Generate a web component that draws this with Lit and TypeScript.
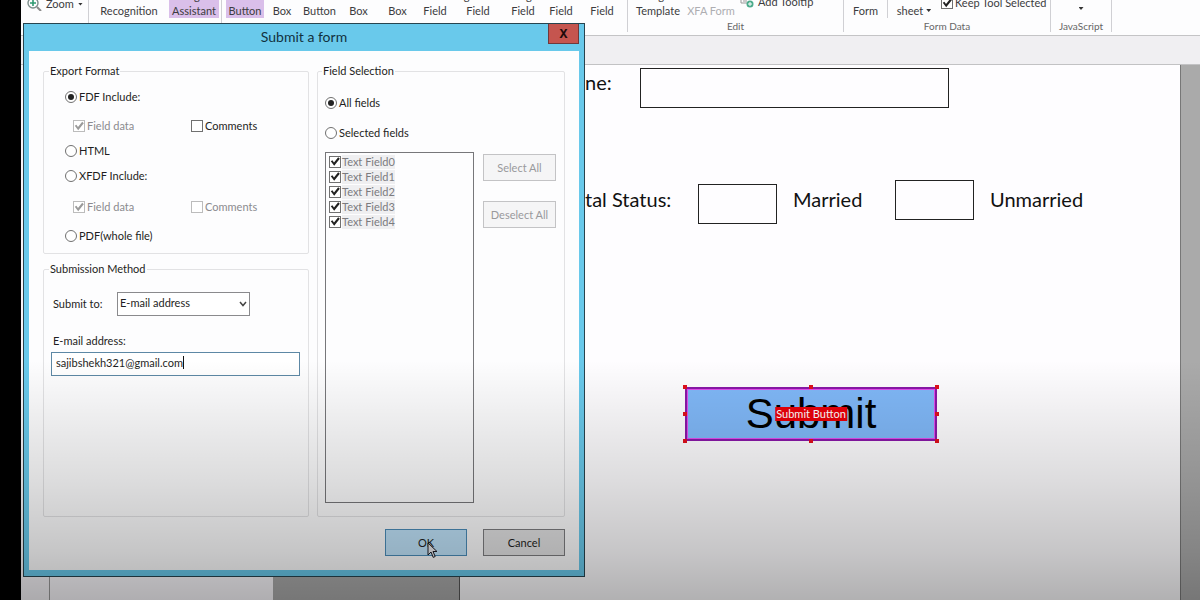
import { LitElement, html, css } from "lit";
import { customElement, property } from "lit/decorators.js";

const controls = css`
  * {
    box-sizing: border-box;
  }
  input[type="checkbox"],
  input[type="radio"] {
    appearance: none;
    flex: none;
    width: 12px;
    height: 12px;
    margin: 0;
    border: 1px solid #707070;
    background: #fff;
    display: grid;
    place-content: center;
  }
  input[type="radio"] {
    border-radius: 50%;
  }
  input[type="radio"]:checked::after {
    content: "";
    width: 6px;
    height: 6px;
    border-radius: 50%;
    background: #222;
  }
  input[type="checkbox"]:checked::after {
    content: "";
    width: 10px;
    height: 10px;
    background: #222;
    clip-path: polygon(8% 48%, 24% 38%, 40% 60%, 82% 8%, 98% 22%, 42% 92%);
  }
  input:disabled {
    border-color: #bcbcbc;
  }
  input[type="checkbox"]:disabled:checked::after {
    background: #9a9a9a;
  }
`;

@customElement("ribbon-bar")
export class RibbonBar extends LitElement {
  static styles = [
    controls,
    css`
      :host {
        display: flex;
        box-sizing: border-box;
        height: 36px;
        background: #fdfdfe;
        border-bottom: 1px solid #c4c4c6;
        color: #3c3c40;
        font: 10px/12px Lato, sans-serif;
      }
      .group {
        display: flex;
        flex-direction: column;
        justify-content: space-between;
        height: 32px;
        border-right: 1px solid #d0d0d4;
      }
      .tools {
        display: grid;
        height: 18px;
        align-items: end;
        align-content: end;
        justify-items: center;
      }
      .view {
        width: 68px;
      }
      .view .tools {
        height: 12px;
      }
      .assist {
        width: 133px;
      }
      .assist .tools {
        grid-template-columns: 80px 50px;
      }
      .fields {
        width: 406px;
      }
      .fields .tools {
        grid-template-columns: 4px 38px 36px 39px 39px 39px 36px 50px 40px 36px 46px;
      }
      .edit {
        width: 216px;
      }
      .edit .tools {
        grid-template-columns: 60px 46px 1fr;
      }
      .data {
        width: 207px;
      }
      .data .tools {
        grid-template-columns: 44px 52px 1fr;
      }
      .script {
        width: 61px;
      }
      button {
        border: 0;
        padding: 0;
        background: none;
        color: inherit;
        font: inherit;
        font-size: 11px;
        line-height: 14px;
        white-space: nowrap;
        display: grid;
        row-gap: 1px;
        align-content: end;
        justify-items: center;
        height: 30px;
      }
      .on {
        justify-self: stretch;
        background: #dabfea;
      }
      .off {
        color: #aeaeb2;
      }
      .row {
        display: flex;
        align-items: center;
        justify-self: start;
        gap: 4px;
        height: 16px;
      }
      label {
        display: flex;
        align-items: center;
        gap: 2px;
        height: 16px;
        font-size: 11px;
        white-space: nowrap;
      }
      .sep {
        border-right: 1px solid #d0d0d4;
        justify-self: stretch;
      }
      .caption {
        text-align: center;
        color: #666;
      }
      .arrow {
        width: 5px;
        height: 3px;
        background: #333;
        clip-path: polygon(0 0, 100% 0, 50% 100%);
      }
      .sheet {
        display: flex;
        align-items: end;
        gap: 3px;
      }
      .sheet .arrow {
        margin-bottom: 6px;
      }
      .zoom {
        margin-left: 6px;
      }
      .tip {
        margin: 0 0 8px 6px;
      }
      .keep {
        justify-self: start;
        margin: 0 0 7px 1px;
      }
      .script .tools {
        height: 10px;
      }
    `,
  ];

  tool(top: string, name: string, cls = "") {
    return html`<button class=${cls}>
      ${top ? html`<span>${top}</span>` : ""}<span>${name}</span>
    </button>`;
  }

  render() {
    return html`
      <div class="group view">
        <div class="tools">
          <button class="row zoom">
            <svg width="15" height="14" viewBox="0 0 15 14" fill="none">
              <circle cx="6" cy="6" r="5" stroke="#7d8f8c" stroke-width="1.4" />
              <path d="M10 10l4 4" stroke="#8a8a8a" stroke-width="2" />
              <path d="M6 3v6M3 6h6" stroke="#2f9a72" stroke-width="1.6" />
            </svg>
            Zoom <i class="arrow"></i>
          </button>
        </div>
      </div>
      <div class="group assist">
        <div class="tools">
          ${this.tool("", "Recognition")} ${this.tool("Designer", "Assistant", "on")}
        </div>
      </div>
      <div class="group fields">
        <div class="tools">
          <span></span>
          ${this.tool("", "Button", "on")} ${this.tool("", "Box")}
          ${this.tool("", "Button")} ${this.tool("", "Box")} ${this.tool("", "Box")}
          ${this.tool("", "Field")} ${this.tool("Signature", "Field")}
          ${this.tool("Image", "Field")} ${this.tool("", "Field")}
          ${this.tool("", "Field")}
        </div>
      </div>
      <div class="group edit">
        <div class="tools">
          ${this.tool("Page", "Template")} ${this.tool("", "XFA Form", "off")}
          <button class="row tip">
            <svg width="14" height="12" viewBox="0 0 14 12" fill="none">
              <path d="M1 0v7h6M3 3h8M3 5h4M12 0v4" stroke="#999" />
              <circle cx="10" cy="8" r="3.5" fill="#4cab8c" />
              <path d="M10 6v4M8 8h4" stroke="#fff" />
            </svg>
            Add Tooltip
          </button>
        </div>
        <div class="caption">Edit</div>
      </div>
      <div class="group data">
        <div class="tools">
          ${this.tool("", "Form", "sep")}
          <button class="sheet">sheet<i class="arrow"></i></button>
          <label class="keep"><input type="checkbox" checked />Keep Tool Selected</label>
        </div>
        <div class="caption">Form Data</div>
      </div>
      <div class="group script">
        <div class="tools"><i class="arrow"></i></div>
        <div class="caption">JavaScript</div>
      </div>
    `;
  }
}

@customElement("submit-dialog")
export class SubmitDialog extends LitElement {
  @property() email = "sajibshekh321@gmail.com";

  static styles = [
    controls,
    css`
      :host {
        display: block;
        box-sizing: border-box;
        border: 1px solid #27444f;
        background: #69c9eb;
        padding: 0 5px 6px;
        color: #1e1e22;
        font: 11px/14px Lato, sans-serif;
      }
      header {
        display: grid;
        grid-template-columns: 31px 1fr 31px;
        height: 27px;
      }
      h1 {
        margin: 0;
        text-align: center;
        color: #12313e;
        font: 14px/26px Lato, sans-serif;
      }
      .close {
        height: 20px;
        padding: 0;
        border: 1px solid #70383a;
        border-top: 0;
        background: #c5554f;
        color: #200a0a;
        font: bold 12px/18px "Noto Sans", sans-serif;
      }
      .body {
        background: #fdfdfe;
        padding: 13px 14px 17px;
        display: grid;
        grid-template-columns: 266fr 248fr;
        grid-template-rows: 190px 255px 28px;
        column-gap: 8px;
        row-gap: 8px;
      }
      fieldset {
        min-width: 0;
        margin: 0;
        padding: 0;
        border: 1px solid #e2e2e4;
        border-radius: 2px;
      }
      legend {
        margin-left: -3px;
        padding: 0 1px;
      }
      label {
        display: flex;
        align-items: center;
        gap: 2px;
      }
      .off {
        color: #8b8b8f;
      }
      .export {
        display: grid;
        grid-template-rows: 28px 30px 20px 30px 32px 26px;
        padding: 5px 0 0 21px;
      }
      .export legend {
        margin-left: -16px;
      }
      .pair {
        display: grid;
        grid-template-columns: 118px 1fr;
        padding-left: 8px;
      }
      .selection {
        grid-column: 2;
        grid-row: 1 / 3;
        padding: 11px 8px 10px 7px;
      }
      .radios {
        display: grid;
        grid-template-rows: 28px 32px;
        padding-bottom: 3px;
      }
      .pick {
        display: grid;
        grid-template-columns: 149fr 73fr;
        column-gap: 9px;
      }
      .list {
        height: 351px;
        border: 1px solid #77777a;
        margin: 0;
        padding: 1px 3px;
        list-style: none;
      }
      .list li {
        display: flex;
        height: 15px;
      }
      .list span {
        background: #efeff1;
        color: #7b7b7f;
      }
      .list label {
        gap: 1px;
      }
      .side {
        display: grid;
        align-content: start;
        gap: 20px;
        padding-top: 2px;
      }
      button {
        height: 27px;
        padding: 0;
        border: 1px solid #7d7d80;
        background: #e3e3e4;
        color: inherit;
        font: inherit;
      }
      button:disabled {
        border-color: #c3c3c5;
        background: #f5f5f6;
        color: #99999c;
      }
      .method {
        padding: 16px 8px 0 7px;
      }
      .method legend {
        margin-left: -2px;
      }
      .to {
        display: grid;
        grid-template-columns: 64px 133px;
        align-items: center;
        padding-left: 2px;
      }
      .choice {
        display: grid;
      }
      .choice > * {
        grid-area: 1 / 1;
      }
      .choice svg {
        place-self: center end;
        margin-right: 3px;
        pointer-events: none;
      }
      select {
        appearance: none;
        height: 24px;
        padding: 0 2px 2px;
        border: 1px solid #8a8a8d;
        border-radius: 0;
        background: #fff;
        color: inherit;
        font: inherit;
      }
      .mail {
        display: block;
        margin-top: 18px;
      }
      .mail > span {
        display: block;
        padding-left: 2px;
      }
      .entry {
        position: relative;
        margin-top: 4px;
      }
      .entry input {
        display: block;
        width: 100%;
        height: 24px;
        border: 1px solid #5d88a5;
        padding: 0 4px 3px;
        background: #fff;
        color: inherit;
        font: inherit;
      }
      .caret {
        position: absolute;
        left: 132px;
        top: 4px;
        width: 1px;
        height: 13px;
        background: #111;
      }
      footer {
        grid-column: 1 / 3;
        display: flex;
        justify-content: end;
        gap: 16px;
        padding-top: 4px;
      }
      footer button {
        width: 82px;
      }
      .ok {
        position: relative;
        border-color: #4b8db9;
        background: #c0e4fb;
      }
      .pointer {
        position: absolute;
        left: 41px;
        top: 12px;
      }
    `,
  ];

  radio(group: string, text: string, checked = false) {
    return html`<label
      ><input type="radio" name=${group} ?checked=${checked} />${text}</label
    >`;
  }

  check(text: string, checked: boolean, disabled: boolean) {
    return html`<label class=${disabled ? "off" : ""}
      ><input type="checkbox" ?checked=${checked} ?disabled=${disabled} />${text}</label
    >`;
  }

  render() {
    return html`
      <header>
        <span></span>
        <h1>Submit a form</h1>
        <button class="close" aria-label="Close">X</button>
      </header>
      <div class="body">
        <fieldset class="export">
          <legend>Export Format</legend>
          ${this.radio("format", "FDF Include:", true)}
          <div class="pair">
            ${this.check("Field data", true, true)} ${this.check("Comments", false, false)}
          </div>
          ${this.radio("format", "HTML")} ${this.radio("format", "XFDF Include:")}
          <div class="pair">
            ${this.check("Field data", true, true)} ${this.check("Comments", false, true)}
          </div>
          ${this.radio("format", "PDF(whole file)")}
        </fieldset>
        <fieldset class="method">
          <legend>Submission Method</legend>
          <div class="to">
            <label for="target">Submit to:</label>
            <div class="choice">
              <select id="target">
                <option>E-mail address</option>
              </select>
              <svg width="8" height="6" viewBox="0 0 8 6" fill="none">
                <path d="M1 1l3 3.5L7 1" stroke="#444" stroke-width="1.5" />
              </svg>
            </div>
          </div>
          <label class="mail">
            <span>E-mail address:</span>
            <div class="entry">
              <input type="text" .value=${this.email} />
              <i class="caret"></i>
            </div>
          </label>
        </fieldset>
        <fieldset class="selection">
          <legend>Field Selection</legend>
          <div class="radios">
            ${this.radio("scope", "All fields", true)}
            ${this.radio("scope", "Selected fields")}
          </div>
          <div class="pick">
            <ul class="list">
              ${[0, 1, 2, 3, 4].map(
                (n) => html`<li>
                  <label><input type="checkbox" checked /><span>Text Field${n}</span></label>
                </li>`
              )}
            </ul>
            <div class="side">
              <button disabled>Select All</button>
              <button disabled>Deselect All</button>
            </div>
          </div>
        </fieldset>
        <footer>
          <button class="ok">
            OK
            <svg class="pointer" width="12" height="17" viewBox="0 0 12 17">
              <path
                d="M1 1v12l3-3 2.2 5.4 2-.9L6 9.500h4z"
                fill="#e8e8ec"
                stroke="#1a1a22"
              />
            </svg>
          </button>
          <button>Cancel</button>
        </footer>
      </div>
    `;
  }
}

@customElement("form-page")
export class FormPage extends LitElement {
  static styles = css`
    * {
      box-sizing: border-box;
    }
    :host {
      display: block;
      background: #fefdff;
      border-right: 1px solid #777;
      border-left: 1px solid #555;
      padding: 3px 0 0 125px;
      color: #111;
      font: 20px/24px Lato, sans-serif;
    }
    label {
      white-space: nowrap;
    }
    .name {
      display: grid;
      grid-template-columns: 55px 309px;
    }
    .name label {
      padding-top: 2px;
    }
    input {
      width: 100%;
      height: 40px;
      margin: 0;
      border: 1px solid #222;
      border-radius: 0;
      background: none;
      font: inherit;
    }
    .status {
      display: grid;
      grid-template-columns: 113px 79px 118px 79px 1fr;
      height: 44px;
      align-items: center;
      margin-top: 72px;
    }
    .low {
      align-self: end;
    }
    .high {
      align-self: start;
    }
    .status label {
      padding: 0 0 6px 16px;
    }
    .status .lead {
      padding-left: 0;
    }
    .widget {
      position: relative;
      width: 252px;
      margin: 163px 0 0 100px;
    }
    .submit {
      display: block;
      width: 100%;
      height: 54px;
      padding: 0;
      border: 2px solid #8a18a8;
      outline: 1px solid #e050f0;
      outline-offset: -3px;
      background: #80b8f8;
      color: #000;
      font: 42px/50px "Liberation Sans", sans-serif;
    }
    .tag {
      position: absolute;
      left: 50%;
      top: 50%;
      translate: -50% -50%;
      background: #ea0008;
      color: #fff;
      padding: 0 1px;
      white-space: nowrap;
      font: 11px/14px Lato, sans-serif;
    }
    .handles {
      position: absolute;
      inset: -2px;
      display: grid;
      grid-template-columns: repeat(3, 4px);
      justify-content: space-between;
      align-content: space-between;
      pointer-events: none;
    }
    .handles i {
      height: 4px;
      background: #e0101c;
    }
    .handles .none {
      background: none;
    }
  `;

  render() {
    return html`
      <div class="name">
        <label for="name">ne:</label>
        <input id="name" type="text" />
      </div>
      <div class="status">
        <label class="lead" for="married">tal Status:</label>
        <input class="low" id="married" type="text" />
        <label for="married">Married</label>
        <input class="high" id="unmarried" type="text" />
        <label for="unmarried">Unmarried</label>
      </div>
      <div class="widget">
        <button class="submit">Submit</button>
        <div class="handles">
          ${[0, 1, 2, 3, 4, 5, 6, 7, 8].map(
            (n) => html`<i class=${n === 4 ? "none" : ""}></i>`
          )}
        </div>
        <span class="tag">Submit Button</span>
      </div>
    `;
  }
}

@customElement("app-root")
export class AppRoot extends LitElement {
  static styles = css`
    :host {
      display: grid;
      grid-template-columns: 21px 1fr;
      height: 100vh;
      background: #000;
    }
    .app {
      position: relative;
      display: grid;
      grid-template-rows: 36px 29px 1fr;
      min-width: 0;
      overflow: hidden;
    }
    .tabs {
      background: #f0eff2;
      border-bottom: 1px solid #c2c2c4;
    }
    .work {
      display: grid;
      grid-template-columns: 29px 223px 186px 1fr 19px;
      background: #aaa;
    }
    .nav {
      background: #f6f4f8;
      border-right: 1px solid #999;
    }
    .list {
      background: #fbf9fd;
    }
    .page {
      grid-column: 4;
    }
    .dialog {
      position: absolute;
      left: 2px;
      top: 23px;
      width: 562px;
    }
    .shade {
      position: absolute;
      inset: 0;
      pointer-events: none;
      background: linear-gradient(
        transparent 60%,
        rgba(0, 0, 0, 0.06) 69%,
        rgba(0, 0, 0, 0.13) 80%,
        rgba(0, 0, 0, 0.22) 92%,
        rgba(0, 0, 0, 0.3)
      );
    }
  `;

  render() {
    return html`
      <span></span>
      <main class="app">
        <ribbon-bar></ribbon-bar>
        <div class="tabs"></div>
        <div class="work">
          <div class="nav"></div>
          <div class="list"></div>
          <form-page class="page"></form-page>
        </div>
        <submit-dialog class="dialog"></submit-dialog>
        <div class="shade"></div>
      </main>
    `;
  }
}
